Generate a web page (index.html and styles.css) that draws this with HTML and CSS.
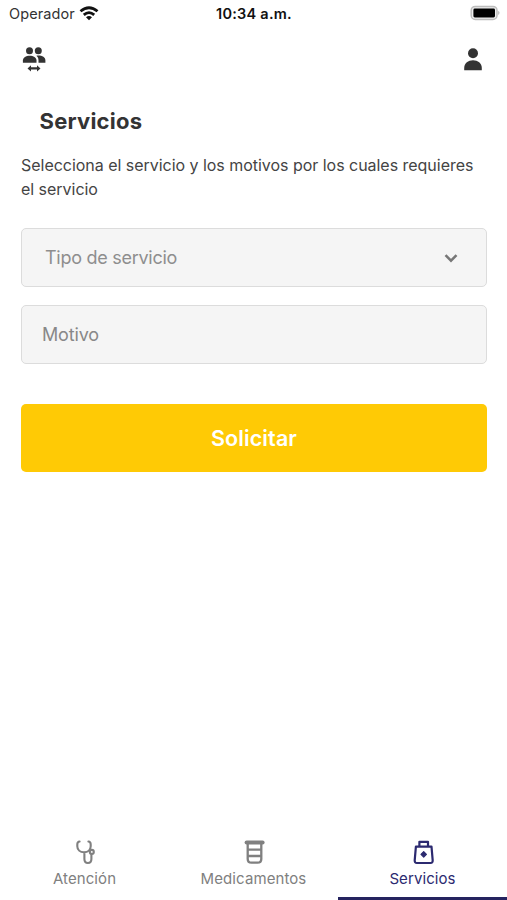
FILE: index.html
```html
<!DOCTYPE html>
<html lang="es">
<head>
<meta charset="utf-8">
<meta name="viewport" content="width=device-width, initial-scale=1">
<title>Servicios</title>
<link rel="stylesheet" href="styles.css">
</head>
<body>
<div class="app">
  <header class="status">
    <div class="carrier">
      <span class="carrier-name">Operador</span>
      <svg class="wifi" width="20" height="15" viewBox="0 0 20 15" fill="none" stroke="#111" stroke-width="2.8">
        <path d="M1.5 5.3Q10-1.8 18.5 5.3M4.8 8.9Q10 4.3 15.2 8.9"/>
        <path d="M7 11.3Q10 8.9 13 11.3L10 14.2Z" fill="#111" stroke="none"/>
      </svg>
    </div>
    <time class="clock">10:34 a.m.</time>
    <svg class="battery" width="31" height="16" viewBox="0 0 31 16">
      <rect x="1.2" y="1.4" width="25.8" height="13" rx="4" fill="#eee" stroke="#bdbdbd" stroke-width="1.5"/>
      <rect x="3.4" y="3.5" width="21.6" height="9" rx="1.4" fill="#000"/>
      <path d="M28.3 5.8Q30.6 7.9 28.3 10Z" fill="#aaa"/>
    </svg>
  </header>
  <nav class="toolbar">
    <svg width="24" height="27" viewBox="0 0 24 27" fill="#333">
      <circle cx="7.5" cy="4.7" r="3.5"/><circle cx="16.3" cy="4.7" r="3.5"/>
      <path d="M.9 16.8V14.6C.9 11.5 4 9.7 7.7 9.7S14.5 11.5 14.5 14.6V16.8Z"/>
      <path d="M14.4 9.7C19.5 9.1 23.4 11 23.4 14.5V16.8H16.5V14.4C16.5 12.3 15.9 10.9 14.4 9.7Z"/>
      <path d="M5.5 22.4 9 19.2V21.3H15V19.2L18.5 22.4 15 25.6V23.5H9V25.6Z"/>
    </svg>
    <svg width="20" height="24" viewBox="0 0 20 24" fill="#333">
      <circle cx="10" cy="6.2" r="5"/>
      <path d="M1.2 23.3V20.8C1.2 16.4 5.2 13.3 10 13.3S18.8 16.4 18.8 20.8V23.3Z"/>
    </svg>
  </nav>
  <main class="content">
    <h1 class="title">Servicios</h1>
    <p class="intro">Selecciona el servicio y los motivos por los cuales requieres el servicio</p>
    <div class="field field-select">
      <span>Tipo de servicio</span>
      <svg width="14" height="10" viewBox="0 0 14 10" fill="none" stroke="#777" stroke-width="2.5"><path d="M1.5 2.2 7 7.7 12.5 2.2"/></svg>
    </div>
    <div class="field field-text"><span>Motivo</span></div>
    <button class="submit" type="button">Solicitar</button>
  </main>
  <footer class="tabs">
    <a class="tab tab-care">
      <svg width="24" height="26" viewBox="0 0 24 26" fill="none" stroke="currentColor" stroke-width="2.1" stroke-linecap="round" stroke-linejoin="round">
        <path d="M6.6 2.5Q4.3 2.7 4.3 5.4V7.2C4.3 10.7 7 13.2 11 13.2S17.7 10.7 17.7 7.2V5.4Q17.7 2.7 15.4 2.5M11.4 13.2V20C11.4 22.5 12.7 24 14.9 24S18.4 22.5 18.4 20V15"/>
        <circle cx="18.8" cy="12.9" r="2"/>
      </svg>
      <span>Atención</span>
    </a>
    <a class="tab tab-meds">
      <svg width="24" height="26" viewBox="0 0 24 26" fill="none" stroke="currentColor" stroke-width="2.3" stroke-linejoin="round">
        <path d="M4.6 3.5H20.6" stroke-width="4" stroke-linecap="round"/>
        <path d="M5.7 4.5V20Q5.7 23.7 9.5 23.7H15.5Q19.3 23.7 19.3 20V4.5M5.7 10.6H19.3M5.7 17H19.3"/>
      </svg>
      <span>Medicamentos</span>
    </a>
    <a class="tab tab-active">
      <svg width="24" height="26" viewBox="0 0 24 26" fill="none" stroke="currentColor" stroke-width="2.2" stroke-linejoin="round">
        <path d="M8.4 7V2.8H17V7M4.9 7.7H20.5L21.7 21.3Q21.8 24 19.5 24H5.9Q3.6 24 3.7 21.3Z"/>
        <path d="M12.7 12.6 15.4 15.3 12.7 18 10 15.3Z" fill="currentColor" stroke="currentColor" stroke-width="1.2"/>
      </svg>
      <span>Servicios</span>
    </a>
  </footer>
</div>
</body>
</html>
```
FILE: styles.css
```css
* { box-sizing: border-box; }
body { margin: 0; background: #fff; font-family: Inter, "Liberation Sans", sans-serif; color: #333; }
.app { width: 100%; height: 900px; display: flex; flex-direction: column; overflow: hidden; }
.status { height: 28px; flex: none; display: grid; grid-template-columns: 1fr auto 1fr; align-items: center; padding: 0 6px 0 9px; }
.carrier { display: flex; align-items: center; gap: 4px; font-size: 14.5px; line-height: 20px; letter-spacing: .1px; }
.wifi { margin-top: -2px; }
.clock { font-size: 14.5px; font-weight: 600; line-height: 20px; letter-spacing: .25px; color: #111; margin-left: -2px; }
.battery { justify-self: end; margin-top: -2px; }
.toolbar { height: 62px; flex: none; display: flex; justify-content: space-between; align-items: center; padding: 0 24px 0 22px; }
.content { flex: 1; padding: 16px 20px 0 21px; }
.title { margin: 0 0 16px 18.5px; font-size: 22px; line-height: 31px; font-weight: 700; letter-spacing: .22px; }
.intro { margin: 0; font-size: 16px; line-height: 24px; letter-spacing: -.03px; color: #444; }
.field { height: 59px; display: flex; align-items: center; justify-content: space-between; background: #f5f5f5; border: 1.5px solid #dcdcdc; border-radius: 5px; font-size: 18px; color: #8e8e8e; }
.field-select { margin-top: 27px; padding: 0 28px 0 23px; letter-spacing: -.27px; }
.field-text { margin-top: 18px; padding: 0 20px; letter-spacing: -.15px; color: #888; }
.submit { display: block; width: 100%; height: 68px; margin: 40px 0 0; padding: 0; border: 0; border-radius: 5px; background: #ffca05; color: #fff; font: 600 21.5px/28px Inter, "Liberation Sans", sans-serif; letter-spacing: .1px; }
.tabs { height: 70px; flex: none; display: grid; grid-template-columns: repeat(3, 1fr); }
.tab { display: flex; flex-direction: column; align-items: center; padding-top: 9px; border-bottom: 3px solid transparent; color: #808080; font-size: 15px; line-height: 20px; letter-spacing: .09px; gap: 4px; }
.tab-active { color: #2c2a70; border-color: #25235f; }
```
